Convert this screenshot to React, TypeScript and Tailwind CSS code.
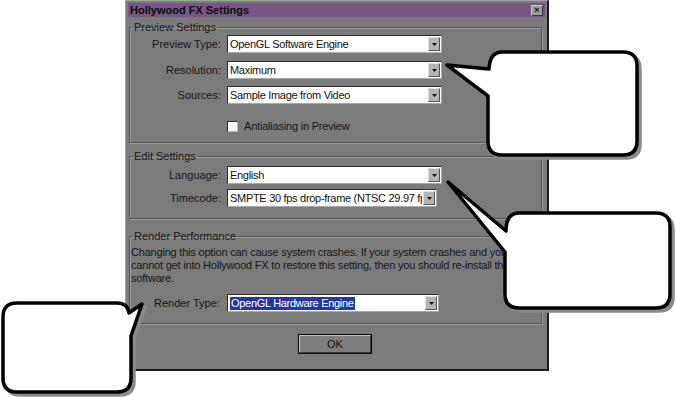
import React from "react";

const font = { fontFamily: '"Liberation Sans", Arial, sans-serif' };

function Combo({ value, width, selected }: { value: string; width: string; selected?: boolean }) {
  return (
    <div
      className={`${width} h-[18px] flex bg-white border border-[#2b2b2b] border-b-[#a8a8a8] border-r-[#a8a8a8]`}
    >
      <div className="flex-1 flex items-center pl-[2px] overflow-hidden whitespace-nowrap text-[11px] tracking-[-0.3px] text-[#111]">
        {selected ? (
          <span className="bg-[#24389a] text-white px-[1px] leading-[13px]">{value}</span>
        ) : (
          <span>{value}</span>
        )}
      </div>
      <div className="w-[12px] m-[1px] bg-[#b4b4b4] border border-[#e0e0e0] border-r-[#555] border-b-[#555] flex items-center justify-center">
        <svg width="5" height="3" viewBox="0 0 5 3">
          <path d="M0 0 H5 L2.5 3 Z" fill="#111" />
        </svg>
      </div>
    </div>
  );
}

function Row({ label, children }: { label: string; children: React.ReactNode }) {
  return (
    <div className="flex items-center">
      <div className="w-[91px] text-right text-[11px] text-[#151515] whitespace-nowrap">{label}</div>
      <div className="ml-[6px]">{children}</div>
    </div>
  );
}

function Group({ title, className, children }: { title: string; className: string; children: React.ReactNode }) {
  return (
    <fieldset
      className={`ml-[3px] mr-[5px] border border-[#545454] shadow-[inset_1px_1px_0_#9c9c9c,1px_1px_0_#9c9c9c] ${className}`}
    >
      <legend className="ml-[3px] px-[1px] text-[11px] leading-[12px] text-[#151515]">{title}</legend>
      {children}
    </fieldset>
  );
}

export default function App() {
  return (
    <div className="relative w-[676px] h-[397px] bg-white overflow-hidden" style={font}>
      <div className="ml-[125px] w-[424px] h-[371px] flex flex-col bg-[#7b7b7b] border-t border-l border-[#a4a4a4] border-r-2 border-b-2 border-r-[#1c1c1c] border-b-[#1c1c1c]">
        {/* title bar */}
        <div className="mt-[2px] mx-[2px] h-[14px] bg-[#775683] flex items-center justify-between px-[2px]">
          <span className="text-[11px] font-bold text-[#0c0c0c] leading-none">Hollywood FX Settings</span>
          <div className="w-[12px] h-[11px] bg-[#9a9a9a] border border-[#d0d0d0] border-r-[#333] border-b-[#333] flex items-center justify-center">
            <span className="text-[9px] font-bold leading-none text-[#111]">×</span>
          </div>
        </div>

        <Group title="Preview Settings" className="mt-[4px] pt-[2px] pb-[10px]">
          <div className="flex flex-col">
            <Row label="Preview Type:">
              <Combo value="OpenGL Software Engine" width="w-[215px]" />
            </Row>
            <div className="mt-[8px]">
              <Row label="Resolution:">
                <Combo value="Maximum" width="w-[215px]" />
              </Row>
            </div>
            <div className="mt-[7px]">
              <Row label="Sources:">
                <Combo value="Sample Image from Video" width="w-[215px]" />
              </Row>
            </div>
            <div className="mt-[16px] ml-[97px] h-[12px] flex items-center">
              <div className="w-[11px] h-[11px] bg-white border border-[#2b2b2b] border-r-[#b0b0b0] border-b-[#b0b0b0]" />
              <span className="ml-[6px] text-[11px] tracking-[-0.2px] text-[#151515]">Antialiasing in Preview</span>
            </div>
          </div>
        </Group>

        <Group title="Edit Settings" className="mt-[7px] pt-[4px] pb-[11px]">
          <div className="flex flex-col">
            <Row label="Language:">
              <Combo value="English" width="w-[215px]" />
            </Row>
            <div className="mt-[5px]">
              <Row label="Timecode:">
                <Combo value="SMPTE 30 fps drop-frame (NTSC 29.97 fps)" width="w-[210px]" />
              </Row>
            </div>
          </div>
        </Group>

        <Group title="Render Performance" className="mt-[11px] pt-[4px] pb-[11px]">
          <p className="pl-[1px] text-[11px] leading-[13px] tracking-[-0.2px] text-[#151515] whitespace-nowrap overflow-hidden">
            Changing this option can cause system crashes. If your system crashes and you
            <br />
            cannot get into Hollywood FX to restore this setting, then you should re-install the
            <br />
            software.
          </p>
          <div className="mt-[9px] flex items-center">
            <div className="w-[97px] pl-[24px] text-[11px] text-[#151515] whitespace-nowrap">Render Type:</div>
            <Combo value="OpenGL Hardware Engine" width="w-[212px]" selected />
          </div>
        </Group>

        <div className="mt-[10px] flex justify-center pr-[3px]">
          <div className="w-[74px] h-[20px] border border-[#0a0a0a] flex">
            <div className="flex-1 bg-[#7e7e7e] border border-[#c4c4c4] border-r-[#3a3a3a] border-b-[#3a3a3a] flex items-center justify-center text-[11px] text-[#111]">
              OK
            </div>
          </div>
        </div>
      </div>

      {/* callouts */}
      <svg className="absolute left-0 top-0 pointer-events-none" width="676" height="397" viewBox="0 0 676 397">
        <g transform="translate(3 3)" fill="#8a8a8a" stroke="#8a8a8a" strokeWidth="3.5" strokeLinejoin="round">
          <path d="M502 52 H623 Q637 52 637 66 V141 Q637 155 623 155 H502 Q488 155 488 141 V96 L447 65 L489 69 Q490 52 502 52 Z" />
          <path d="M519 213 H656 Q670 213 670 227 V294 Q670 308 656 308 H519 Q505 308 505 294 V252 L448 182 L506 231 Q506 213 519 213 Z" />
          <path d="M17 303 H117 Q128 303 129 313 L142 304 L131 336 V378 Q131 392 117 392 H17 Q3 392 3 378 V317 Q3 303 17 303 Z" />
        </g>
        <g fill="#fff" stroke="#000" strokeWidth="3.5" strokeLinejoin="round">
          <path d="M502 52 H623 Q637 52 637 66 V141 Q637 155 623 155 H502 Q488 155 488 141 V96 L447 65 L489 69 Q490 52 502 52 Z" />
          <path d="M519 213 H656 Q670 213 670 227 V294 Q670 308 656 308 H519 Q505 308 505 294 V252 L448 182 L506 231 Q506 213 519 213 Z" />
          <path d="M17 303 H117 Q128 303 129 313 L142 304 L131 336 V378 Q131 392 117 392 H17 Q3 392 3 378 V317 Q3 303 17 303 Z" />
        </g>
      </svg>
    </div>
  );
}
